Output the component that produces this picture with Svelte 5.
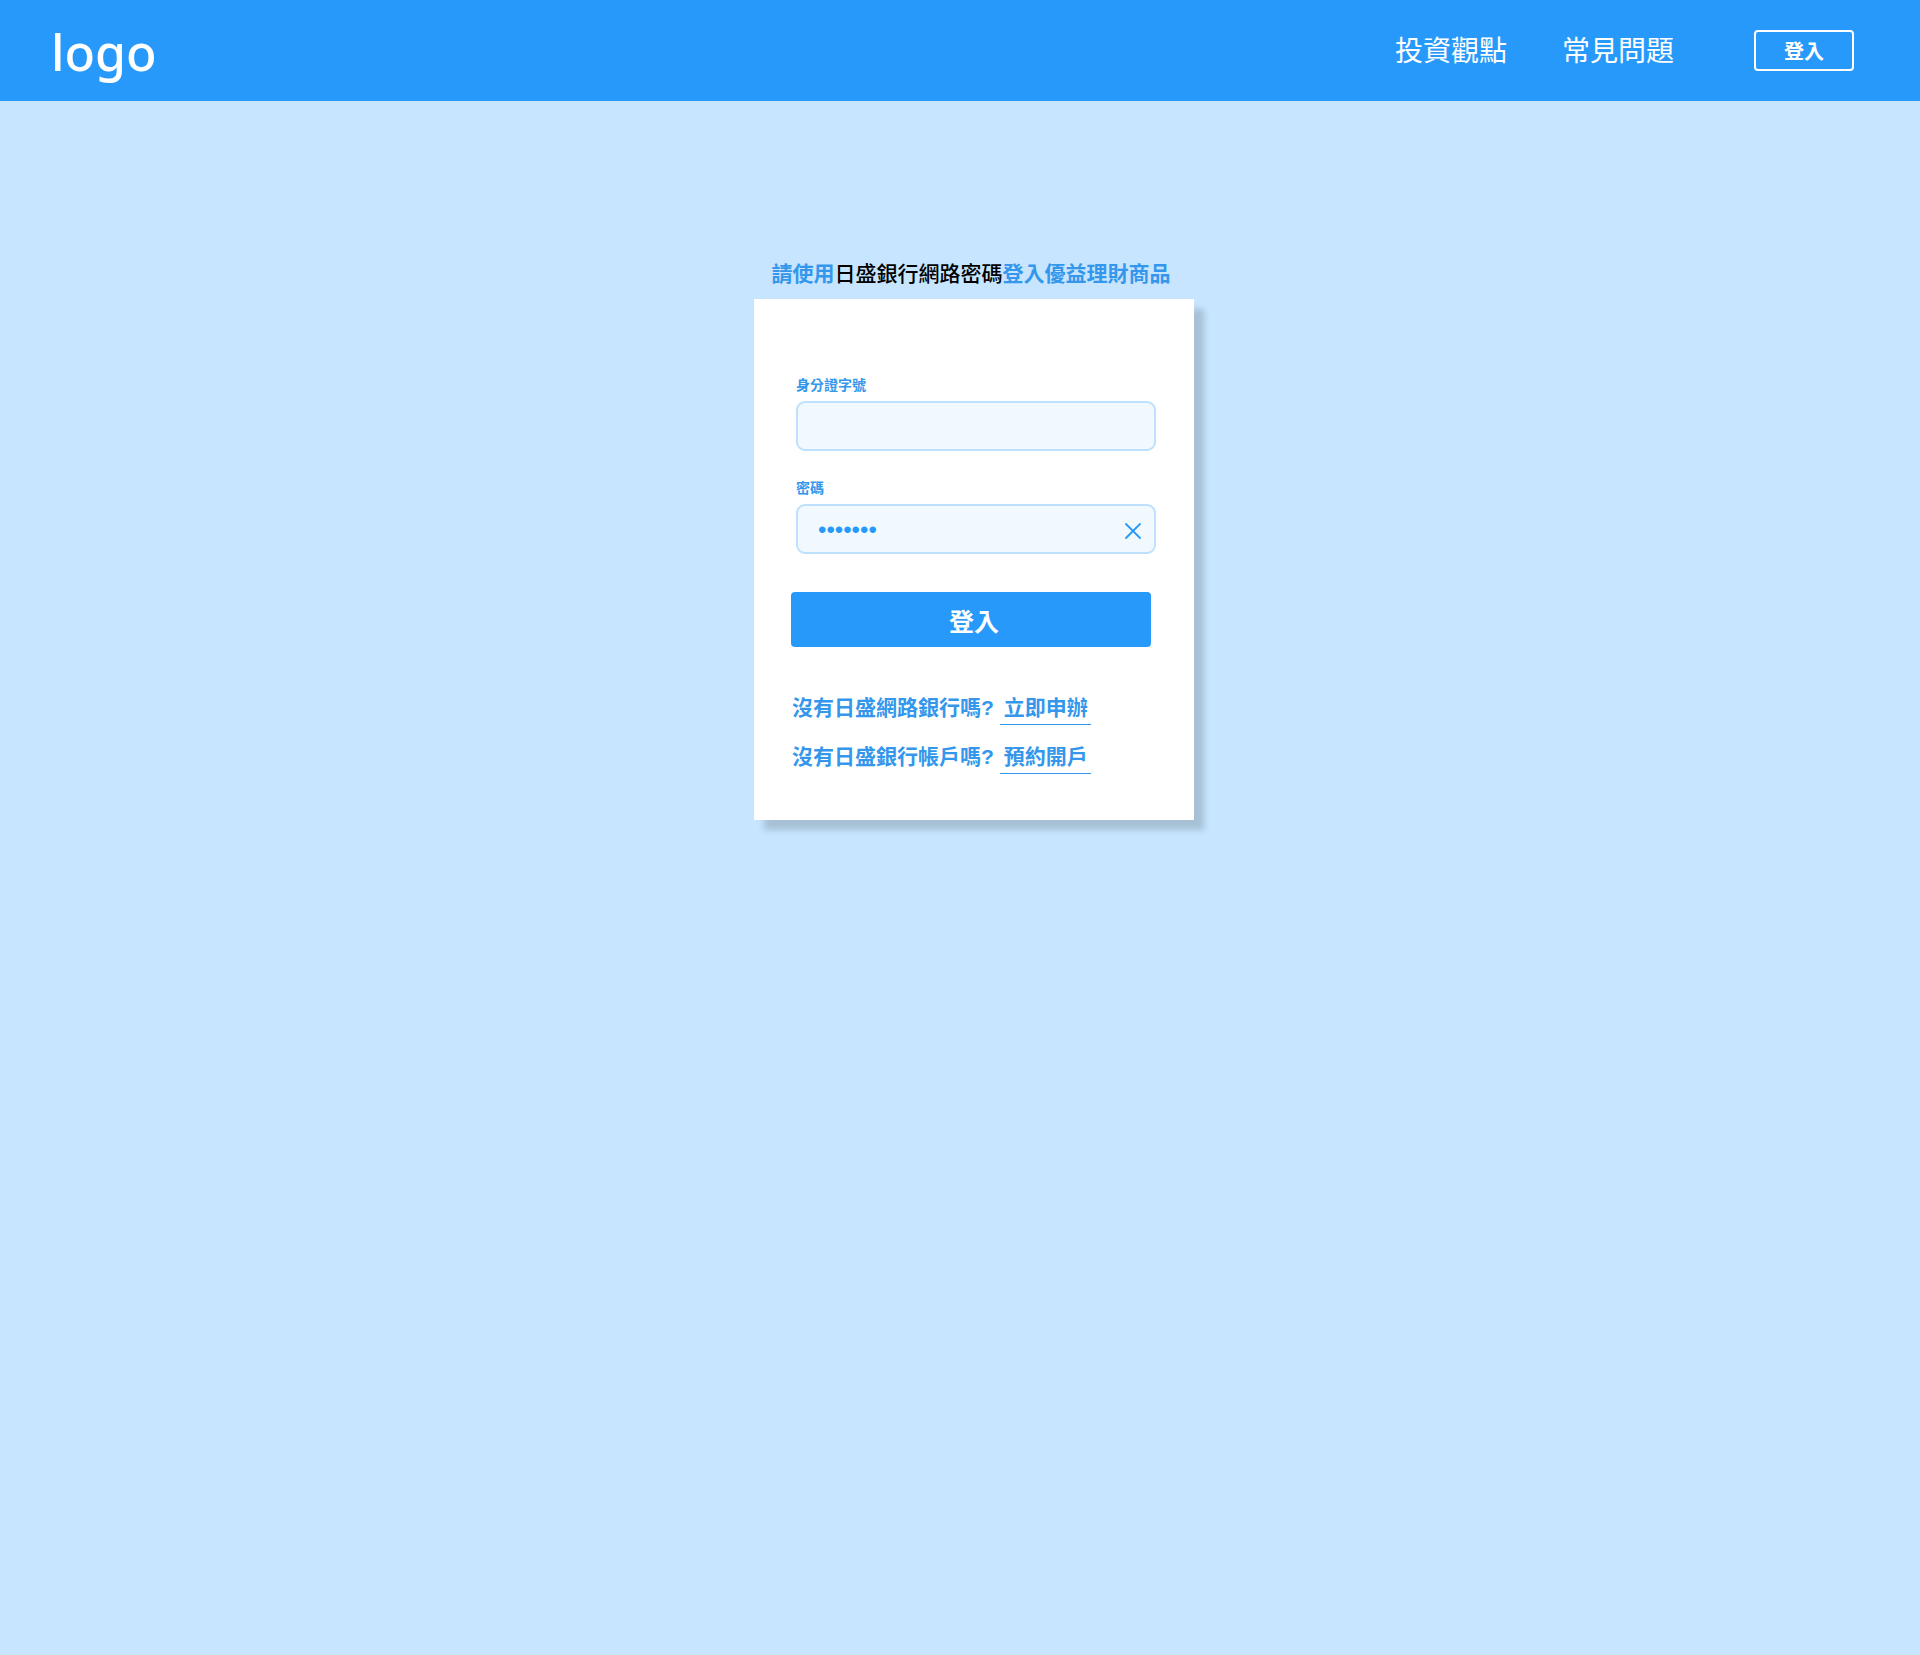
<script>
  let account = $state('');
  let password = $state('1234567');

  const links = [
    { question: '沒有日盛網路銀行嗎?', action: '立即申辦' },
    { question: '沒有日盛銀行帳戶嗎?', action: '預約開戶' }
  ];
</script>

<header class="topbar">
  <a class="logo" href="#home">logo</a>
  <nav class="nav">
    <a href="#insights">投資觀點</a>
    <a href="#faq">常見問題</a>
  </nav>
  <button class="nav-login" type="button">登入</button>
</header>

<main class="page">
  <h1 class="title">請使用<strong>日盛銀行網路密碼</strong>登入優益理財商品</h1>

  <form class="card" onsubmit={(e) => e.preventDefault()}>
    <div class="field">
      <label for="account">身分證字號</label>
      <input id="account" type="text" bind:value={account} />
    </div>
    <div class="field">
      <label for="password">密碼</label>
      <div class="control">
        <input id="password" type="password" bind:value={password} />
        <button class="clear" type="button" aria-label="清除密碼" onclick={() => (password = '')}>
          <svg viewBox="0 0 16 16" width="16" height="16" aria-hidden="true">
            <path d="M1 1L15 15M15 1L1 15" fill="none" stroke="currentColor" stroke-width="1.8" stroke-linecap="round" />
          </svg>
        </button>
      </div>
    </div>

    <button class="submit" type="submit">登入</button>

    <div class="links">
      {#each links as link}
        <p><span>{link.question}</span><a href="#apply">{link.action}</a></p>
      {/each}
    </div>
  </form>
</main>

<style>
  :global(body) {
    background: #c7e5ff;
    font-family: 'Liberation Sans', 'Noto Sans CJK TC', sans-serif;
  }

  a {
    color: inherit;
    text-decoration: none;
  }

  button,
  input {
    box-sizing: border-box;
    font-family: inherit;
    margin: 0;
  }

  button {
    cursor: pointer;
  }

  .topbar {
    box-sizing: border-box;
    display: flex;
    align-items: center;
    height: 101px;
    padding: 0 66px 0 51px;
    background: #2699fb;
    color: #fff;
  }

  .logo {
    margin-right: auto;
    padding-top: 2px;
    font: 500 50px/60px 'Noto Sans', sans-serif;
  }

  .nav {
    display: flex;
    gap: 55px;
    margin-right: 80px;
    padding-top: 2px;
    font-size: 28px;
    line-height: 40px;
  }

  .nav-login {
    width: 100px;
    height: 41px;
    padding: 0;
    border: 2px solid #fff;
    border-radius: 4px;
    background: transparent;
    color: #fff;
    font-size: 20px;
    font-weight: 700;
  }

  .page {
    display: flex;
    flex-direction: column;
    align-items: center;
    padding: 158px 0 80px 28px;
    color: #3497ec;
  }

  .title {
    margin: 0 6px 10px 0;
    font-size: 21px;
    font-weight: 700;
    line-height: 30px;
  }

  .title strong {
    color: #000;
    font-weight: 500;
  }

  .card {
    box-sizing: border-box;
    display: flex;
    flex-direction: column;
    width: 440px;
    max-width: 100%;
    padding: 76px 38px 46px 37px;
    background: #fff;
    box-shadow: 10px 10px 6px rgba(0, 0, 0, 0.16);
  }

  .field {
    display: flex;
    flex-direction: column;
    gap: 6px;
    margin: 0 0 27px 5px;
  }

  .field label {
    align-self: flex-start;
    font-size: 14px;
    font-weight: 700;
    line-height: 20px;
  }

  .field input {
    width: 100%;
    height: 50px;
    padding: 2px 56px 0 20px;
    border: 2px solid #bce0fd;
    border-radius: 9px;
    background: #f1f9ff;
    color: #2699fb;
    font-size: 24px;
    outline: none;
  }

  .control {
    position: relative;
  }

  .clear {
    position: absolute;
    top: 11px;
    right: 7px;
    display: grid;
    place-items: center;
    width: 32px;
    height: 32px;
    padding: 0;
    border: 0;
    background: none;
    color: #2699fb;
  }

  .submit {
    height: 55px;
    margin: 11px 5px 0 0;
    padding: 0 0 0 6px;
    border: 0;
    border-radius: 4px;
    background: #2699fb;
    color: #fff;
    font-size: 25px;
    font-weight: 700;
  }

  .links {
    display: flex;
    flex-direction: column;
    gap: 16px;
    padding: 45px 0 0 1px;
    font-size: 21px;
    font-weight: 700;
    line-height: 32px;
  }

  .links p {
    display: flex;
    gap: 6px;
    margin: 0;
  }

  .links a {
    padding: 0 3px 0 4px;
    border-bottom: 1px solid #3497ec;
  }
</style>
